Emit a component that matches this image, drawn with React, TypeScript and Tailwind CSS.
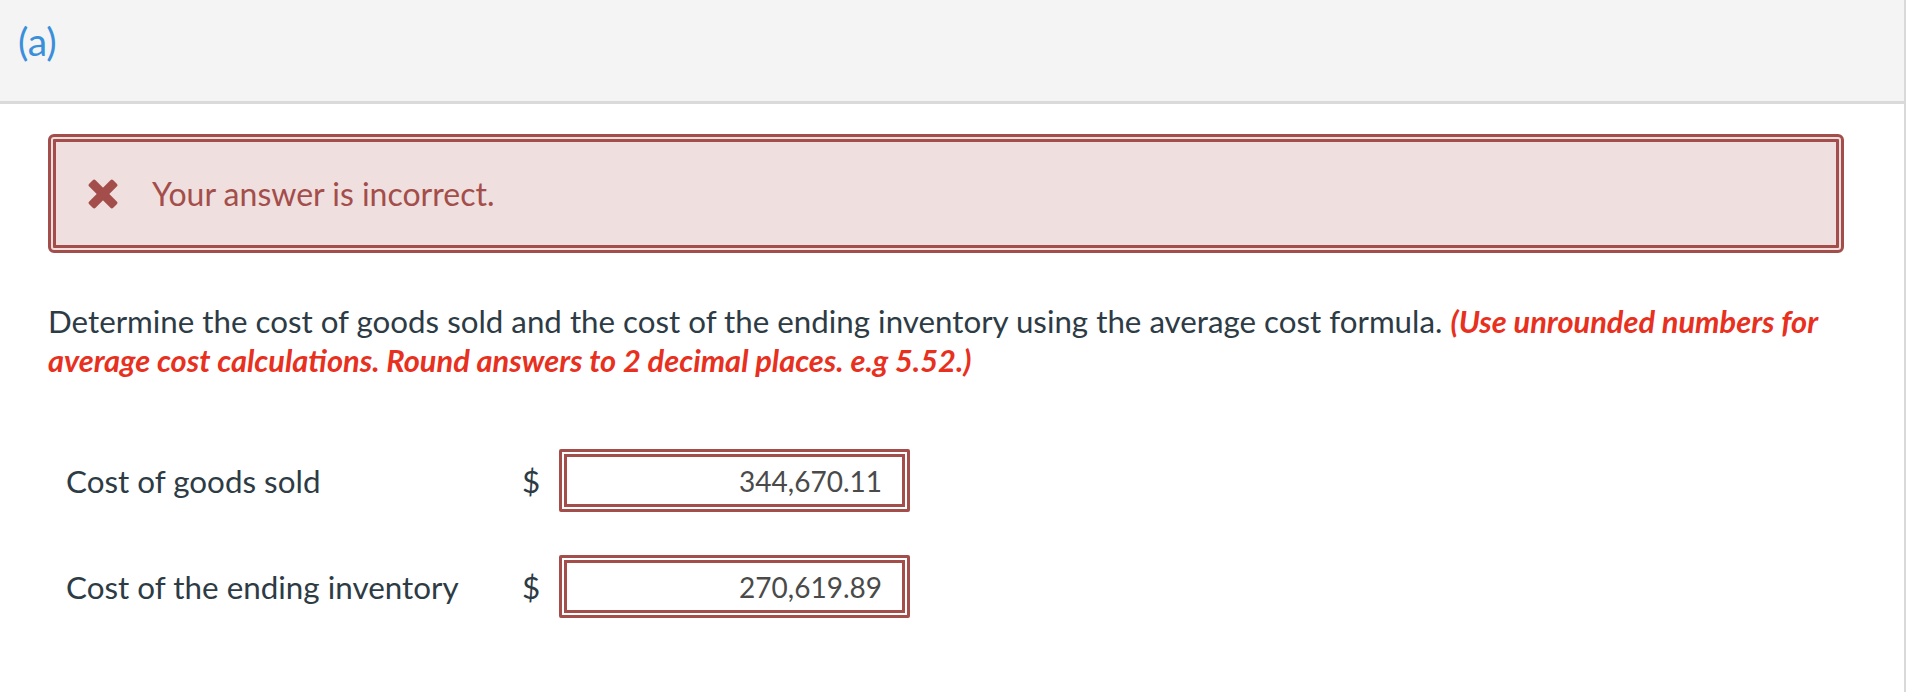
import React from "react";

function CrossIcon() {
  return (
    <svg width="30" height="30" viewBox="0 0 30 30" className="shrink-0">
      <g fill="#a34e4a" transform="rotate(45 15 15)">
        <rect x="-2" y="10.5" width="34" height="9" rx="2" />
        <rect x="10.5" y="-2" width="9" height="34" rx="2" />
      </g>
    </svg>
  );
}

const rows = [
  { label: "Cost of goods sold", value: "344,670.11" },
  { label: "Cost of the ending inventory", value: "270,619.89" },
];

export default function App() {
  return (
    <div className="w-full min-h-[692px] bg-white border-r-2 border-[#d9d9d9] font-['Lato',sans-serif]">
      {/* Part header */}
      <div className="h-[104px] bg-[#f4f4f4] border-b-[3px] border-[#dadada] px-[18px] pt-[18px]">
        <span className="block text-[39px] leading-[47px] text-[#3a8fdb]">(a)</span>
      </div>

      <div className="pl-[48px] pr-[60px]">
        {/* Feedback */}
        <div className="mt-[30px] h-[119px] flex items-center gap-[34px] pl-[32px] bg-[#efdfdf] border-[8px] border-double border-[#a34e4a] rounded-[6px]">
          <CrossIcon />
          <span className="text-[32px] leading-[38px] text-[#a34e4a]">Your answer is incorrect.</span>
        </div>

        {/* Question */}
        <p className="mt-[49px] text-[31.3px] leading-[38px] text-[#2d3b45]">
          Determine the cost of goods sold and the cost of the ending inventory using the average cost formula.{" "}
          <span className="text-[30.8px] font-bold italic text-[#e8301e]">
            (Use unrounded numbers for average cost calculations. Round answers to 2 decimal places. e.g 5.52.)
          </span>
        </p>

        {/* Answers */}
        <div className="mt-[69px] pl-[18px] flex flex-col gap-[43px]">
          {rows.map((row) => (
            <div key={row.label} className="flex items-center">
              <span className="w-[456px] text-[31.4px] leading-[38px] text-[#2d3b45]">{row.label}</span>
              <span className="w-[37px] text-[31.4px] leading-[38px] text-[#2d3b45]">$</span>
              <div className="w-[351px] h-[63px] border-[8px] border-double border-[#a34e4a] rounded-[2px] bg-white">
                <input
                  readOnly
                  value={row.value}
                  className="w-full h-full bg-transparent text-right pr-[20px] text-[28px] text-[#4a4a4a] outline-none"
                />
              </div>
            </div>
          ))}
        </div>
      </div>
    </div>
  );
}
